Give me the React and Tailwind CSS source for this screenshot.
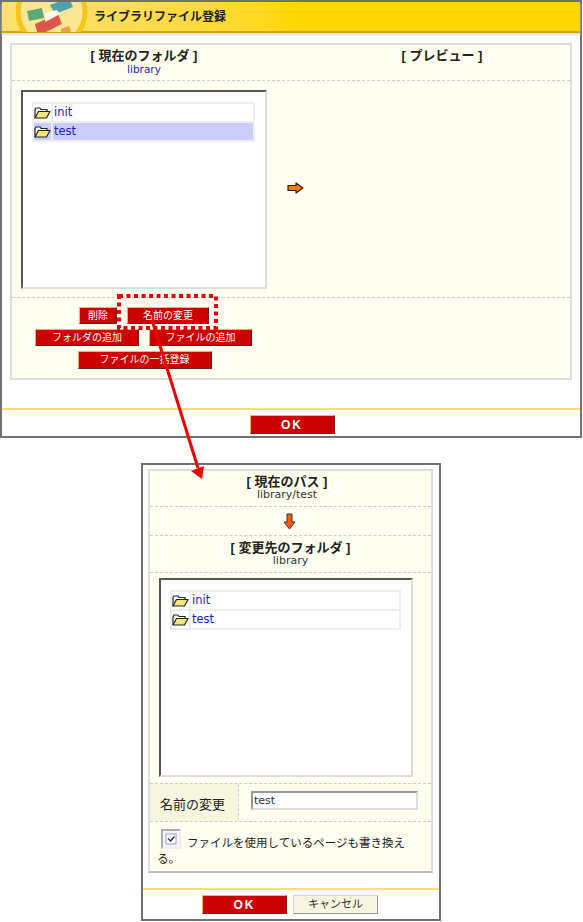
import React from "react";

const jp = "font-['Liberation_Sans','Noto_Sans_CJK_JP',sans-serif]";
const latin = "font-['DejaVu_Sans','Noto_Sans_CJK_JP',sans-serif]";
const dash = "border-b border-dashed border-[#cccccc]";

function Folder() {
  return (
    <svg width="17" height="12" viewBox="0 0 17 12" className="shrink-0">
      <path d="M1 11V2.500L2 1h4l1 1.500h6V4.500" fill="#ffffff" stroke="#222" strokeWidth="1.200" />
      <path d="M1 11l3.500-6.500H16L12.500 11z" fill="#f5e878" stroke="#222" strokeWidth="1.200" strokeLinejoin="round" />
    </svg>
  );
}

function ArrowRight() {
  return (
    <svg width="17" height="12" viewBox="0 0 17 12">
      <path d="M1 3.500h8V1l7 5-7 5V8.500H1z" fill="#f57c00" stroke="#222" strokeWidth="1.200" strokeLinejoin="round" />
    </svg>
  );
}

function ArrowDown() {
  return (
    <svg width="13" height="17" viewBox="0 0 13 17">
      <path d="M4 1h5v8h3l-5.500 7L1 9h3z" fill="#f25c05" stroke="#333" strokeWidth="1" strokeLinejoin="round" />
    </svg>
  );
}

function RedButton({ className, children }) {
  return (
    <div className={`flex items-center justify-center bg-[#cc0000] border border-t-[#f0b060] border-l-[#f0b060] border-r-[#702020] border-b-[#702020] text-white text-[10px] leading-none ${jp} ${className}`}>
      {children}
    </div>
  );
}

function OkButton() {
  return (
    <RedButton className="w-[85px] h-[19px]">
      <span className="font-bold text-[12px] tracking-[2px]">OK</span>
    </RedButton>
  );
}

function Heading({ title, sub, subClass }) {
  return (
    <div className="flex flex-col items-center">
      <div className={`text-[13px] leading-[15px] font-bold text-[#222] ${jp}`}>{title}</div>
      {sub && <div className={`leading-[12px] ${subClass} ${latin}`}>{sub}</div>}
    </div>
  );
}

function FileList({ selected, className }) {
  const rows = ["init", "test"];
  return (
    <div className={`bg-white border-2 border-[#dddddd] border-t-[#555555] border-l-[#555555] pt-[10px] pl-[9px] pr-[10px] ${className}`}>
      <div className="border-2 border-b-0 border-[#eeeeee]">
        {rows.map((row) => (
          <div
            key={row}
            className={`flex items-center h-[19px] border-b-2 border-[#eeeeee] ${row === selected ? "bg-[#ccccff]" : ""}`}
          >
            <div className="w-[19px] h-full flex items-center justify-center border-r-2 border-[#eeeeee]">
              <Folder />
            </div>
            <span className={`pl-[1px] text-[11.500px] leading-none text-[#2222bb] ${latin}`}>{row}</span>
          </div>
        ))}
      </div>
    </div>
  );
}

function Logo() {
  return (
    <svg width="72" height="30" viewBox="0 0 72 30" className="ml-[14px] shrink-0">
      <circle cx="35.500" cy="10" r="36" fill="#f5c518" />
      <circle cx="35.500" cy="10" r="31" fill="#fbe694" />
      <path d="M11 9l15-3 2 10-15 3z" fill="#5fa878" />
      <path d="M34 3l19-7 4 9-18 7z" fill="#4f9fb0" />
      <path d="M19 22l23-10 4 10-16 8H21z" fill="#d9584a" />
      <path d="M29 11l12-3 3 4-15 8z" fill="#fffbe8" />
      <path d="M45 27l8-3 2 6H45z" fill="#e8a040" />
    </svg>
  );
}

export default function App() {
  return (
    <div className={`relative w-[583px] h-[922px] bg-white overflow-hidden ${jp}`}>
      {/* upper window */}
      <div className="w-[582px] h-[438px] border-2 border-[#707070] flex flex-col">
        <div className="h-[31px] shrink-0 flex items-center bg-gradient-to-r from-[#fbe070] via-[#ffd700] to-[#ffd700] border-b-2 border-[#d0a818] shadow-[0_2px_2px_#dddddd]">
          <Logo />
          <span className={`ml-[6px] text-[12px] font-bold text-[#222] ${jp}`}>ライブラリファイル登録</span>
        </div>

        <div className="mt-[10px] mx-[8px] h-[337px] border-2 border-[#dddddd] bg-[#ffffef] flex flex-col">
          <div className={`h-[36px] shrink-0 flex pt-[3px] ${dash}`}>
            <div className="w-[264px] shrink-0">
              <Heading title="[ 現在のフォルダ ]" sub="library" subClass="text-[10.500px] text-[#2222bb]" />
            </div>
            <div className="flex-1">
              <div className="w-[200px] ml-[66px]">
                <Heading title="[ プレビュー ]" />
              </div>
            </div>
          </div>

          <div className={`h-[217px] shrink-0 flex items-start pt-[9px] pl-[9px] ${dash}`}>
            <FileList selected="test" className="w-[246px] h-[199px]" />
            <div className="ml-[20px] mt-[92px]">
              <ArrowRight />
            </div>
          </div>

          <div className="flex flex-col items-center w-[265px] ml-[1px] pt-[9px] gap-[5px]">
            <div className="flex gap-[10px] ml-[-3px]">
              <RedButton className="w-[38px] h-[17px]">削除</RedButton>
              <RedButton className="w-[82px] h-[17px]">名前の変更</RedButton>
            </div>
            <div className="flex gap-[10px] ml-[-4px]">
              <RedButton className="w-[104px] h-[17px]">フォルダの追加</RedButton>
              <RedButton className="w-[103px] h-[17px]">ファイルの追加</RedButton>
            </div>
            <RedButton className="w-[134px] h-[18px] ml-[-2px]">ファイルの一括登録</RedButton>
          </div>
        </div>

        <div className="mt-[28px] border-t-2 border-[#ffdf66] flex justify-center pt-[5px] pl-[2px]">
          <OkButton />
        </div>
      </div>

      {/* lower window */}
      <div className="mt-[25px] ml-[141px] w-[300px] h-[458px] border-2 border-[#707070] flex flex-col">
        <div className="mt-[4px] ml-[5px] w-[285px] h-[404px] border-2 border-[#dddddd] border-b-[#bbbbbb] bg-[#ffffef] flex flex-col">
          <div className={`h-[36px] shrink-0 pt-[3px] pr-[7px] ${dash}`}>
            <Heading title="[ 現在のパス ]" sub="library/test" subClass="text-[11px] text-[#333]" />
          </div>
          <div className={`h-[29px] shrink-0 flex items-center justify-center pr-[2px] ${dash}`}>
            <ArrowDown />
          </div>
          <div className={`h-[37px] shrink-0 pt-[4px] ${dash}`}>
            <Heading title="[ 変更先のフォルダ ]" sub="library" subClass="text-[11px] text-[#333]" />
          </div>
          <div className={`h-[211px] shrink-0 pt-[5px] pl-[9px] ${dash}`}>
            <FileList className="w-[254px] h-[199px]" />
          </div>
          <div className={`h-[38px] shrink-0 flex ${dash}`}>
            <div className="w-[89px] flex items-center pl-[10px] pt-[4px] bg-[#f5f5e0] border-r border-dashed border-[#cccccc] text-[13px] text-[#222]">
              名前の変更
            </div>
            <div className="pl-[12px] pt-[7px]">
              <div className={`w-[167px] h-[19px] bg-white border-2 border-[#dddddd] border-t-[#999999] border-l-[#999999] pl-[1px] text-[11px] leading-[15px] text-[#333] ${latin}`}>
                test
              </div>
            </div>
          </div>
          <div className="pt-[7px] pl-[7px] pr-[18px] text-[11.500px] leading-[16px] text-[#222]">
            <span className="inline-flex items-center justify-center align-[2px] w-[20px] h-[20px] ml-[4px] mr-[6px] border-2 border-[#aaaaaa] border-r-[#eeeeee] border-b-[#eeeeee] bg-[#f4f4ff]">
              <svg width="12" height="12" viewBox="0 0 12 12">
                <rect x="1" y="1" width="10" height="10" fill="#fff" stroke="#9999cc" />
                <path d="M3 5.500l2.500 2.500 4-4.500" fill="none" stroke="#222266" strokeWidth="1.300" />
              </svg>
            </span>
            ファイルを使用しているページも書き換える。
          </div>
        </div>

        <div className="mt-[15px] border-t-2 border-[#ffdf66] flex justify-center gap-[6px] pt-[5px] pr-[2px]">
          <OkButton />
          <div className="w-[85px] h-[19px] flex items-center justify-center bg-[#f5f5e0] border border-t-[#f5d890] border-l-[#f5d890] border-r-[#999999] border-b-[#999999] text-[11px] text-[#333]">
            キャンセル
          </div>
        </div>
      </div>

      {/* callout overlay */}
      <svg className="absolute left-0 top-0 pointer-events-none" width="583" height="922" viewBox="0 0 583 922">
        <rect x="119" y="296" width="97" height="32" fill="none" stroke="#e60012" strokeWidth="4" strokeDasharray="4 3.500" />
        <line x1="152" y1="320" x2="198" y2="468" stroke="#ee0000" strokeWidth="3" />
        <path d="M191 471l13-5-2 13z" fill="#ee0000" />
      </svg>
    </div>
  );
}
